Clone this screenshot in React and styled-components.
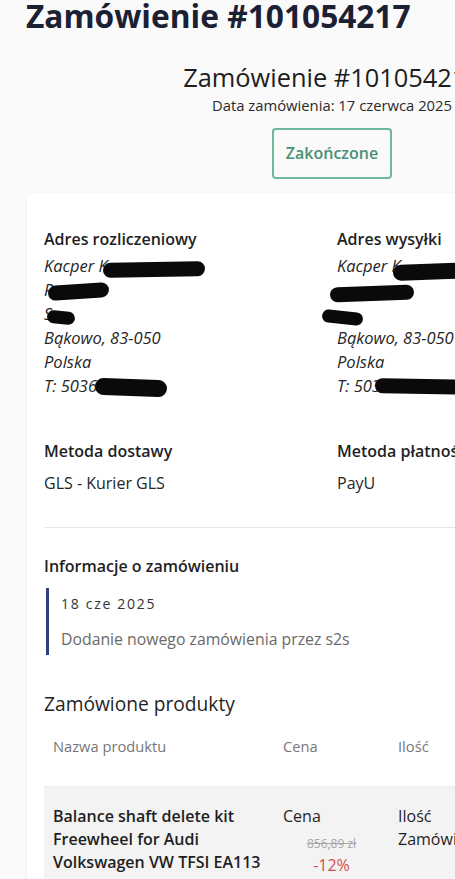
import React from 'react';
import styled, { createGlobalStyle } from 'styled-components';

const GlobalStyle = createGlobalStyle`
html { overflow: hidden; }
body {
  margin: 0;
  background: #fafafa;
  font-family: "Open Sans", "Noto Sans", sans-serif;
  color: #222;
}
`;

const Page = styled.div`
width: 612px;
margin-left: 26px;
`;
const Title = styled.h1`
margin: 0;
font-size: 31.7px;
line-height: 32px;
font-weight: 700;
color: #1b2032;
white-space: nowrap;
`;
const Header = styled.div`
display: flex;
flex-direction: column;
align-items: center;
margin-top: 28px;
`;
const OrderNo = styled.h2`
margin: 0;
font-size: 25.4px;
line-height: 34px;
font-weight: 400;
color: #1d1d1d;
white-space: nowrap;
`;
const OrderDate = styled.div`
margin-top: 1px;
font-size: 14.8px;
line-height: 20px;
color: #2a2a2a;
`;
const Status = styled.div`
margin-top: 13px;
padding: 12px 12px;
border: 2px solid #6db89b;
border-radius: 4px;
font-size: 16px;
line-height: 23px;
font-weight: 600;
color: #4b8f74;
`;
const Card = styled.div`
margin: 14px 0 0 1px;
background: #fff;
border-radius: 6px;
box-shadow: 0 1px 4px rgba(0,0,0,0.06);
padding: 34px 17px 40px;
`;
const Columns = styled.div`
display: grid;
grid-template-columns: 283px 1fr;
column-gap: 10px;
margin-top: ${({ $top }) => $top || 0}px;
`;
const Label = styled.div`
font-size: 16px;
line-height: 24px;
font-weight: 600;
color: #1f1f1f;
white-space: nowrap;
`;
const Address = styled.div`
position: relative;
margin-top: 3px;
font-style: italic;
font-size: 16.5px;
line-height: 24px;
color: #262626;
`;
const Line = styled.div`
height: 24px;
white-space: nowrap;
`;
const Scribble = styled.span`
position: absolute;
left: ${({ $x }) => $x}px;
top: ${({ $y }) => $y}px;
width: ${({ $w }) => $w}px;
height: ${({ $h }) => $h}px;
background: #0a0a0a;
border-radius: ${({ $h }) => $h / 2}px;
transform: rotate(${({ $r }) => $r || 0}deg);
`;
const Value = styled.div`
margin-top: 8px;
font-size: 16px;
line-height: 24px;
color: #262626;
`;
const Divider = styled.hr`
margin: 32px 0 0;
border: 0;
border-top: 1px solid #e6e6e6;
`;
const SectionTitle = styled.div`
margin-top: 26px;
font-size: 16px;
line-height: 24px;
font-weight: 600;
color: #1f1f1f;
`;
const History = styled.div`
margin: 10px 0 0 2px;
border-left: 3px solid #2d3f7c;
padding: 6px 0 5px 12px;
`;
const HistoryDate = styled.div`
font-size: 14px;
line-height: 20px;
letter-spacing: 1.7px;
color: #333;
`;
const HistoryText = styled.div`
margin-top: 14px;
font-size: 15.8px;
line-height: 22px;
color: #6a6a6a;
`;
const ProductsTitle = styled.div`
margin-top: 35px;
font-size: 19.2px;
line-height: 28px;
color: #1f1f1f;
`;
const Table = styled.div`
display: grid;
grid-template-columns: 230px 115px 1fr;
margin-top: 17px;
`;
const HeadCell = styled.div`
padding: 0 9px 29px;
font-size: 14.7px;
line-height: 22px;
color: #777;
`;
const Cell = styled.div`
background: #f3f3f3;
border-top: 1px solid #ececec;
padding: 18px 9px 12px;
font-size: 16px;
line-height: 23px;
font-weight: ${({ $bold }) => ($bold ? 600 : 400)};
color: #1f1f1f;
white-space: ${({ $nowrap }) => ($nowrap ? 'nowrap' : 'normal')};
overflow: hidden;
`;
const PriceBox = styled.div`
display: flex;
flex-direction: column;
align-items: center;
margin-top: 8px;
`;
const OldPrice = styled.span`
font-size: 12px;
line-height: 16px;
color: #a6a6a6;
text-decoration: line-through;
`;
const Discount = styled.span`
margin-top: 2px;
font-size: 16px;
line-height: 22px;
color: #d2504b;
`;

const billing = [
  { x: 59, y: 8, w: 102, h: 15, r: -1 },
  { x: 4, y: 30, w: 61, h: 15, r: -4 },
  { x: 3, y: 57, w: 28, h: 13, r: 6 },
  { x: 51, y: 125, w: 72, h: 17, r: 2 },
];
const shipping = [
  { x: 56, y: 9, w: 110, h: 16, r: -2 },
  { x: -7, y: 32, w: 84, h: 15, r: -2 },
  { x: -15, y: 57, w: 41, h: 13, r: 6 },
  { x: 38, y: 125, w: 110, h: 15, r: 1 },
];

function AddressBlock({ lines, marks }) {
  return (
    <Address>
      {lines.map((l, i) => <Line key={i}>{l}</Line>)}
      {marks.map((m, i) => (
        <Scribble key={i} $x={m.x} $y={m.y} $w={m.w} $h={m.h} $r={m.r} />
      ))}
    </Address>
  );
}

export default function App() {
  return (
    <Page>
      <GlobalStyle />
      <Title>Zamówienie #101054217</Title>
      <Header>
        <OrderNo>Zamówienie #101054217</OrderNo>
        <OrderDate>Data zamówienia: 17 czerwca 2025</OrderDate>
        <Status>Zakończone</Status>
      </Header>
      <Card>
        <Columns>
          <div>
            <Label>Adres rozliczeniowy</Label>
            <AddressBlock
              lines={['Kacper K', 'Ry', 'S', 'Bąkowo, 83-050', 'Polska', 'T: 5036']}
              marks={billing}
            />
          </div>
          <div>
            <Label>Adres wysyłki</Label>
            <AddressBlock
              lines={['Kacper K', '', '', 'Bąkowo, 83-050', 'Polska', 'T: 503']}
              marks={shipping}
            />
          </div>
        </Columns>
        <Columns $top={41}>
          <div>
            <Label>Metoda dostawy</Label>
            <Value>GLS - Kurier GLS</Value>
          </div>
          <div>
            <Label>Metoda płatności</Label>
            <Value>PayU</Value>
          </div>
        </Columns>
        <Divider />
        <SectionTitle>Informacje o zamówieniu</SectionTitle>
        <History>
          <HistoryDate>18 cze 2025</HistoryDate>
          <HistoryText>Dodanie nowego zamówienia przez s2s</HistoryText>
        </History>
        <ProductsTitle>Zamówione produkty</ProductsTitle>
        <Table>
          <HeadCell>Nazwa produktu</HeadCell>
          <HeadCell>Cena</HeadCell>
          <HeadCell>Ilość</HeadCell>
          <Cell $bold>Balance shaft delete kit Freewheel for Audi Volkswagen VW TFSI EA113</Cell>
          <Cell>
            Cena
            <PriceBox>
              <OldPrice>856,89 zł</OldPrice>
              <Discount>-12%</Discount>
            </PriceBox>
          </Cell>
          <Cell $nowrap>
            Ilość
            <div>Zamówiono: 1</div>
          </Cell>
        </Table>
      </Card>
    </Page>
  );
}
